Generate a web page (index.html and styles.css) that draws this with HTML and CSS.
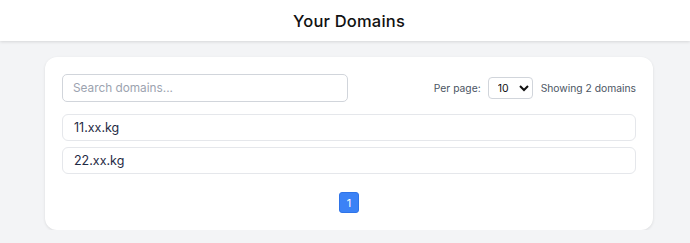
FILE: index.html
```html
<!DOCTYPE html>
<html lang="en">
<head>
  <meta charset="UTF-8">
  <meta name="viewport" content="width=device-width, initial-scale=1.0">
  <title>Your Domains</title>
  <link rel="stylesheet" href="styles.css">
</head>
<body>
  <header class="topbar">
    <h1>Your Domains</h1>
  </header>
  <main class="page">
    <div class="card">
      <div class="toolbar">
        <input type="text" class="search" placeholder="Search domains...">
        <div class="controls">
          <label for="perPage">Per page:</label>
          <select id="perPage" class="per-page">
            <option>10</option>
            <option>25</option>
            <option>50</option>
          </select>
          <span class="count">Showing 2 domains</span>
        </div>
      </div>
      <ul class="domains">
        <li>11.xx.kg</li>
        <li>22.xx.kg</li>
      </ul>
      <div class="pager">
        <button class="page-btn active">1</button>
      </div>
    </div>
  </main>
</body>
</html>
```

FILE: styles.css
```css
* { box-sizing: border-box; }
body { margin: 0; font-family: Inter, "Noto Sans", sans-serif; background: #f3f4f6; color: #1f2937; }
.topbar { background: #fff; height: 41px; display: flex; align-items: center; justify-content: center; padding-left: 8px; box-shadow: 0 1px 3px rgba(0,0,0,0.12); }
.topbar h1 { margin: 0; font-size: 16.5px; font-weight: 500; color: #111; letter-spacing: 0.2px; }
.page { padding: 16px 37px 0 45px; }
.card { background: #fff; border-radius: 12px; padding: 17px; box-shadow: 0 1px 3px rgba(0,0,0,0.1); }
.toolbar { display: flex; align-items: center; justify-content: space-between; height: 28px; }
.search { width: 286px; height: 28px; border: 1px solid #d1d5db; border-radius: 5px; padding: 0 10px; font-family: inherit; font-size: 11.8px; color: #374151; }
.search::placeholder { color: #9ca3af; }
.controls { display: flex; align-items: center; font-size: 10.3px; color: #4b5563; }
.controls label { margin-right: 7px; }
.per-page { width: 45px; height: 22px; border: 1px solid #d1d5db; border-radius: 4px; background: #fff; font-family: inherit; font-size: 10.5px; padding: 0 5px; margin-right: 8px; color: #111; }
.domains { list-style: none; margin: 12px 0 0; padding: 0; display: flex; flex-direction: column; gap: 6px; }
.domains li { height: 27px; display: flex; align-items: center; padding-left: 11px; border: 1px solid #e5e7eb; border-radius: 6px; font-size: 12.5px; color: #1f2a44; }
.pager { display: flex; justify-content: center; margin-top: 18px; }
.page-btn { width: 20px; height: 21px; border: 1px solid #2f74e8; border-radius: 3px; background: #3b82f6; color: #fff; font-family: inherit; font-size: 11px; padding: 0; }
```
